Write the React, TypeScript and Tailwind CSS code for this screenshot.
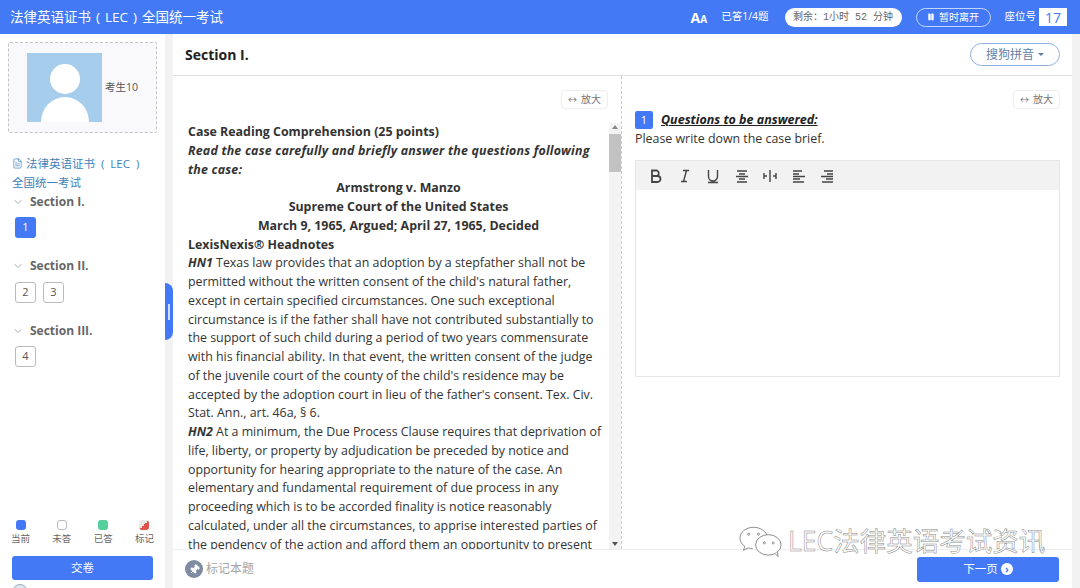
import { ChevronDown, FileText, Pause, Pin } from 'lucide-react';

const PASSAGE: { text: string; cls?: string; lead?: string }[] = [
  { text: 'Case Reading Comprehension (25 points)', cls: 'font-bold' },
  { text: 'Read the case carefully and briefly answer the questions following', cls: 'font-bold italic tracking-[0.2px]' },
  { text: 'the case:', cls: 'font-bold italic tracking-[0.2px]' },
  { text: 'Armstrong v. Manzo', cls: 'font-bold text-center' },
  { text: 'Supreme Court of the United States', cls: 'font-bold text-center' },
  { text: 'March 9, 1965, Argued; April 27, 1965, Decided', cls: 'font-bold text-center' },
  { text: 'LexisNexis® Headnotes', cls: 'font-bold' },
  { lead: 'HN1', text: ' Texas law provides that an adoption by a stepfather shall not be' },
  { text: "permitted without the written consent of the child's natural father," },
  { text: 'except in certain specified circumstances. One such exceptional' },
  { text: 'circumstance is if the father shall have not contributed substantially to' },
  { text: 'the support of such child during a period of two years commensurate' },
  { text: 'with his financial ability. In that event, the written consent of the judge' },
  { text: "of the juvenile court of the county of the child's residence may be" },
  { text: "accepted by the adoption court in lieu of the father's consent. Tex. Civ." },
  { text: 'Stat. Ann., art. 46a, § 6.' },
  { lead: 'HN2', text: ' At a minimum, the Due Process Clause requires that deprivation of' },
  { text: 'life, liberty, or property by adjudication be preceded by notice and' },
  { text: 'opportunity for hearing appropriate to the nature of the case. An' },
  { text: 'elementary and fundamental requirement of due process in any' },
  { text: 'proceeding which is to be accorded finality is notice reasonably' },
  { text: 'calculated, under all the circumstances, to apprise interested parties of' },
  { text: 'the pendency of the action and afford them an opportunity to present' },
];

const SECTIONS = [
  { name: 'Section I.', items: [1] },
  { name: 'Section II.', items: [2, 3] },
  { name: 'Section III.', items: [4] },
];

function ZoomButton() {
  return (
    <div className="flex h-[19px] w-[47px] items-center justify-center gap-1 rounded-sm border border-[#eeeeee] text-[10px] text-[#777777]">
      <span className="text-[9px]">↔</span>
      <span>放大</span>
    </div>
  );
}

function ToolIcon({ d, w = 1.4 }: { d: string; w?: number }) {
  return (
    <svg width="16" height="16" viewBox="0 0 16 16" fill="none" stroke="#444444" strokeWidth={w}>
      <path d={d} />
    </svg>
  );
}

function Legend({ label, box }: { label: string; box: string }) {
  return (
    <div className="flex flex-col items-center gap-[3px]">
      <div className={`h-[10px] w-[10px] rounded-[3px] ${box}`} />
      <span className="text-[9.5px] leading-[11px] text-[#666666]">{label}</span>
    </div>
  );
}

export default function App() {
  return (
    <div className="relative flex h-[588px] w-[1080px] flex-col overflow-hidden bg-white font-['Open_Sans','Noto_Sans_CJK_SC',sans-serif] text-[#333333]">
      <header className="flex h-[34px] shrink-0 items-center bg-[#4479f6] pl-[10px] pr-[13px] text-white">
        <span className="text-[13.5px] [word-spacing:1.5px]">法律英语证书 ( LEC ) 全国统一考试</span>
        <span className="ml-auto text-[14px] font-bold">A<span className="text-[10px]">A</span></span>
        <span className="ml-[14px] text-[10.5px]">已答1/4题</span>
        <span className="ml-[16px] flex h-[19px] w-[117px] items-center justify-center rounded-full bg-white font-['Liberation_Mono','Noto_Sans_CJK_SC',monospace] text-[10px] text-[#666666]">
          剩余：1小时 52 分钟
        </span>
        <span className="ml-[14px] flex h-[19px] w-[75px] items-center justify-center gap-1 rounded-full border border-[#c3d5fb] text-[10px]">
          <Pause size={8} fill="white" />
          暂时离开
        </span>
        <span className="ml-[14px] text-[10.5px]">座位号</span>
        <span className="ml-[3px] flex h-[18px] w-[28px] items-center justify-center bg-white text-[14px] text-[#4479f6]">17</span>
      </header>

      <div className="flex min-h-0 flex-1 bg-[#f2f2f2]">
        <aside className="flex w-[165px] shrink-0 flex-col bg-white pt-2">
          <div className="mx-2 flex h-[91px] items-center rounded-[2px] border border-dashed border-[#c4c4c4] bg-[#f9f9fb] pl-[18px]">
            <svg width="75" height="69" viewBox="0 0 75 69">
              <rect width="75" height="69" fill="#a6cdec" />
              <circle cx="38" cy="26" r="15" fill="white" />
              <ellipse cx="38" cy="69" rx="24" ry="25" fill="white" />
            </svg>
            <span className="ml-[3px] text-[10.5px] text-[#555555]">考生10</span>
          </div>

          <div className="mt-[21px] pl-3 text-[11.5px] leading-[19px] text-[#3f83b8]">
            <div className="flex items-center gap-[3px] whitespace-nowrap">
              <FileText size={11} strokeWidth={1.5} />
              <span className="[word-spacing:3px]">法律英语证书 ( LEC )</span>
            </div>
            <div>全国统一考试</div>
          </div>

          <div className="flex flex-col">
            {SECTIONS.map((s) => (
              <div key={s.name} className="h-[64.5px]">
                <div className="flex h-[19px] items-center pl-3 text-[12px] font-bold text-[#666666]">
                  <ChevronDown size={12} className="mr-[6px] text-[#aaaaaa]" />
                  {s.name}
                </div>
                <div className="mt-[6px] flex gap-[7px] pl-[15px]">
                  {s.items.map((n) => (
                    <div
                      key={n}
                      className={
                        n === 1
                          ? 'flex h-[21px] w-[21px] items-center justify-center rounded-[3px] bg-[#4479f6] text-[11px] text-white'
                          : 'flex h-[21px] w-[21px] items-center justify-center rounded-[3px] border border-[#bbbbbb] text-[11px] text-[#555555]'
                      }
                    >
                      {n}
                    </div>
                  ))}
                </div>
              </div>
            ))}
          </div>

          <div className="mt-auto flex justify-between px-[11px]">
            <Legend label="当前" box="bg-[#4479f6]" />
            <Legend label="未答" box="border border-[#bbbbbb] bg-white" />
            <Legend label="已答" box="bg-[#55cf9b]" />
            <Legend label="标记" box="bg-[linear-gradient(135deg,#e8e8e8_50%,#e0524a_50%)]" />
          </div>
          <div className="mx-3 mt-[12px] flex h-[24px] items-center justify-center rounded-[3px] bg-[#4479f6] text-[11.5px] text-white">
            交卷
          </div>
          <div className="-mb-[12px] ml-3 mt-[4px] h-[16px] w-[16px] shrink-0 rounded-full border border-[#9aa7b5] bg-[#dde6ee]" />
        </aside>

        <div className="relative w-[8px] shrink-0">
          <div className="absolute left-0 top-[249px] flex h-[57px] w-[8px] items-center justify-center rounded-r-[8px] bg-[#4479f6]">
            <div className="h-[16px] w-[2px] bg-[#cfe0ff]" />
          </div>
        </div>

        <main className="flex min-w-0 w-[899px] flex-col bg-white">
          <div className="flex h-[42px] shrink-0 items-center justify-between border-b border-[#e2e2e2] pl-3 pr-3">
            <span className="text-[14px] font-bold text-[#222222]">Section I.</span>
            <span className="flex h-[23px] w-[90px] items-center justify-center gap-1 rounded-full border border-[#8fb0e0] text-[12px] text-[#5e7fa8]">
              搜狗拼音
              <span className="h-0 w-0 border-x-[3px] border-t-[3px] border-x-transparent border-t-[#5e7fa8]" />
            </span>
          </div>

          <div className="flex min-h-0 flex-1">
            <section className="flex w-[449px] shrink-0 flex-col border-r border-dashed border-[#cccccc]">
              <div className="flex h-[47px] shrink-0 items-start justify-end pr-[13px] pt-[14px]">
                <ZoomButton />
              </div>
              <div className="flex min-h-0 flex-1">
                <div className="min-w-0 flex-1 overflow-hidden pl-[15px] text-[12.4px] leading-[18.75px] text-[#333333]">
                  {PASSAGE.map((line, i) => (
                    <div key={i} className={`whitespace-nowrap ${line.cls ?? ''}`}>
                      {line.lead && <b className="italic">{line.lead}</b>}
                      {line.text}
                    </div>
                  ))}
                </div>
                <div className="flex w-[12px] shrink-0 flex-col items-center bg-[#f3f3f3]">
                  <span className="mt-[2px] h-0 w-0 border-x-[3px] border-b-[4px] border-x-transparent border-b-[#888888]" />
                  <div className="mt-[5px] h-[38px] w-full bg-[#c2c2c2]" />
                  <span className="mb-[3px] mt-auto h-0 w-0 border-x-[3px] border-t-[4px] border-x-transparent border-t-[#555555]" />
                </div>
              </div>
            </section>

            <section className="min-w-0 flex-1 pl-[13px] pr-3">
              <div className="flex h-[33px] items-start justify-end pt-[14px]">
                <ZoomButton />
              </div>
              <div className="mt-[2px] flex h-[18px] items-center">
                <span className="flex h-[18px] w-[18px] items-center justify-center rounded-[2px] bg-[#4479f6] text-[11px] text-white">1</span>
                <span className="ml-2 text-[12.5px] font-bold italic text-[#222222] underline">Questions to be answered:</span>
              </div>
              <div className="text-[12.4px] leading-[19px]">Please write down the case brief.</div>
              <div className="mt-3 h-[217px] border border-[#e6e6e6]">
                <div className="flex h-[29px] items-center gap-[12.5px] bg-[#f2f2f2] pl-[12px]">
                  <ToolIcon w={1.8} d="M4 2.500h5a3 3 0 0 1 0 5.500H4zM4 8h5.500a3 3 0 0 1 0 6H4zM4 2v12" />
                  <ToolIcon d="M6 2.500h6M4 13.500h6M9.500 2.500l-3 11" />
                  <ToolIcon d="M3.500 2v6.500a4.500 4.500 0 0 0 9 0V2M3 14.500h10" />
                  <ToolIcon d="M3 3h10M5 6h6M2 8.500h12M5 11h6M3 14h10" />
                  <ToolIcon d="M8 2v12M2 5v6M14 5v6M2 8h3M11 8h3" />
                  <ToolIcon d="M2 3h9M2 6h6M2 8.500h12M2 11h7M2 14h11" />
                  <ToolIcon d="M5 3h9M8 6h6M2 8.500h12M7 11h7M3 14h11" />
                </div>
              </div>
            </section>
          </div>

          <div className="flex h-[39px] shrink-0 items-center justify-between border-t border-[#eeeeee] pl-3 pr-[13px]">
            <div className="flex items-center gap-[3px] text-[12px] text-[#a5a5a5]">
              <span className="flex h-[18px] w-[18px] items-center justify-center rounded-full bg-[#7f8ba3]">
                <Pin size={11} fill="white" stroke="white" className="rotate-45" />
              </span>
              标记本题
            </div>
            <div className="flex h-[25px] w-[142px] items-center justify-center gap-[3px] rounded-[3px] bg-[#4479f6] text-[11.5px] text-white">
              下一页
              <span className="flex h-[12px] w-[12px] items-center justify-center rounded-full bg-white text-[10px] font-bold leading-none text-[#4479f6]">›</span>
            </div>
          </div>
        </main>
      </div>

      {/* 公众号水印 */}
      <div className="absolute left-[738px] top-[525px] flex items-center gap-[5px]">
        <svg width="45" height="32" viewBox="0 0 46 32" fill="white" stroke="#8a8a8a" strokeWidth="1">
          <path d="M16 2C8 2 2 7 2 13c0 3.500 2 6.500 5 8.500l-1.500 4 5-2.500c1.500.5 3 .7 4.500.7" />
          <path d="M16 2c7 0 13 4 14 10" fill="none" />
          <ellipse cx="31" cy="20" rx="13" ry="10.500" />
          <path d="M38 29l3 3-1-5" />
          <circle cx="11" cy="9" r="1" />
          <circle cx="21" cy="9" r="1" />
          <circle cx="27" cy="18" r="1" />
          <circle cx="36" cy="18" r="1" />
        </svg>
        <span className="whitespace-nowrap text-[26.5px] leading-none text-white [-webkit-text-stroke:0.5px_#8a8a8a]">
          LEC法律英语考试资讯
        </span>
      </div>
    </div>
  );
}
